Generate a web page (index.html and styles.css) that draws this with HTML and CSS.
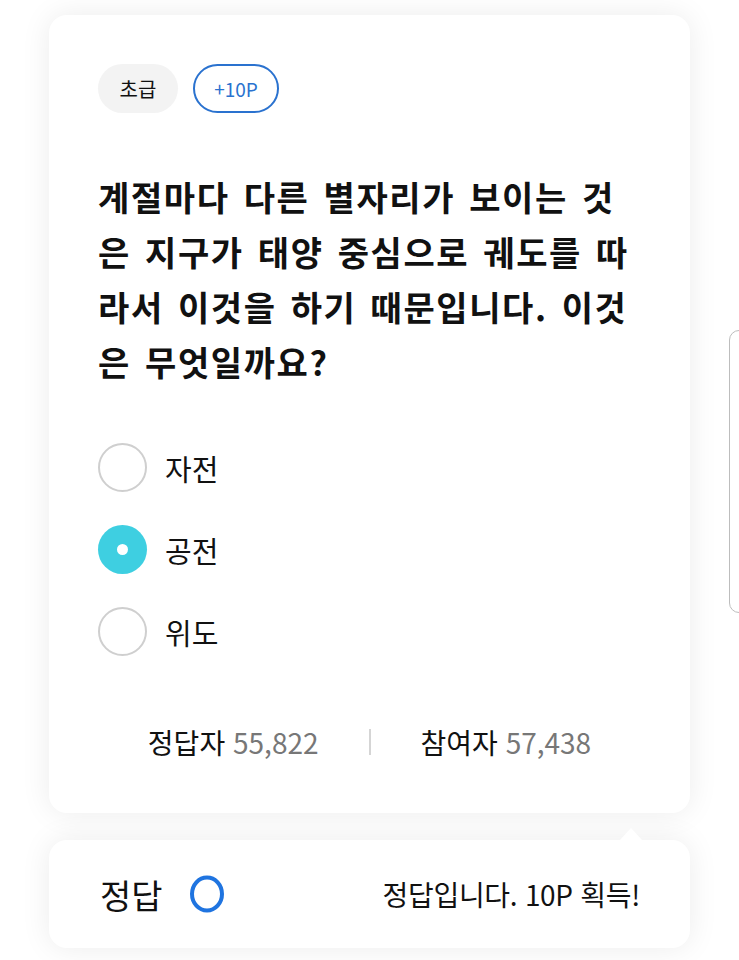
FILE: index.html
```html
<!DOCTYPE html>
<html lang="ko">
<head>
<meta charset="utf-8">
<link rel="stylesheet" href="styles.css">
</head>
<body>
<div class="page">
  <div class="quiz-card">
    <div class="badges">
      <span class="badge level">초급</span>
      <span class="badge point">+10P</span>
    </div>
    <h1 class="question">계절마다 다른 별자리가 보이는 것은 지구가 태양 중심으로 궤도를 따라서 이것을 하기 때문입니다. 이것은 무엇일까요?</h1>
    <ul class="options">
      <li class="option"><span class="radio"></span><span class="label">자전</span></li>
      <li class="option selected"><span class="radio"></span><span class="label">공전</span></li>
      <li class="option"><span class="radio"></span><span class="label">위도</span></li>
    </ul>
    <div class="stats">
      <div class="stat"><span class="stat-name">정답자</span> <span class="stat-num">55,822</span></div>
      <span class="divider"></span>
      <div class="stat"><span class="stat-name">참여자</span> <span class="stat-num">57,438</span></div>
    </div>
  </div>
  <div class="result-card">
    <div class="result-left">
      <span class="result-title">정답</span>
      <svg class="ring" width="36" height="40" viewBox="0 0 36 40"><ellipse cx="18" cy="20" rx="15" ry="16.5" fill="none" stroke="#1f74e0" stroke-width="4"/></svg>
    </div>
    <span class="result-msg">정답입니다. 10P 획득!</span>
  </div>
  <div class="next-card"></div>
</div>
</body>
</html>
```
FILE: styles.css
```css
* { box-sizing: border-box; }
html, body { margin: 0; padding: 0; background: #fff; }
body {
  font-family: "Noto Sans CJK KR", "Noto Sans", sans-serif;
  color: #111;
  width: 739px;
  height: 960px;
  overflow: hidden;
}
.page {
  position: relative;
  padding: 15px 0 0 49px;
  height: 960px;
}
.quiz-card {
  width: 641px;
  height: 798px;
  background: #fff;
  border-radius: 18px;
  box-shadow: 0 0 30px rgba(0,0,0,0.08);
  padding: 49px 49px 0 49px;
  display: flex;
  flex-direction: column;
}
.badges { display: flex; gap: 15px; }
.badge {
  height: 49px;
  border-radius: 25px;
  display: inline-flex;
  align-items: center;
  justify-content: center;
  font-size: 20px;
}
.badge.level { width: 80px; background: #f3f3f3; color: #111; }
.badge.point { width: 86px; border: 2px solid #2a72cf; color: #2a72cf; font-size: 19px; }
.question {
  margin: 56px 0 0 0;
  font-size: 34px;
  line-height: 55px;
  font-weight: 700;
  letter-spacing: 1.6px;
  word-spacing: 3px;
  color: #111;
  width: 543px;
  word-break: break-all;
}
.options {
  list-style: none;
  margin: 54px 0 0 0;
  padding: 0;
  display: flex;
  flex-direction: column;
  gap: 33px;
}
.option { display: flex; align-items: center; gap: 18px; height: 49px; }
.radio {
  width: 49px; height: 49px;
  border-radius: 50%;
  border: 2px solid #cfcfcf;
  position: relative;
  flex: none;
}
.option.selected .radio {
  border: none;
  background: #3ecfe1;
}
.option.selected .radio::after {
  content: "";
  position: absolute;
  left: 19px; top: 19px;
  width: 11px; height: 11px;
  border-radius: 50%;
  background: #fff;
}
.label { font-size: 29px; color: #111; }
.stats {
  margin-top: 66px;
  display: flex;
  align-items: center;
  justify-content: center;
  gap: 50px;
  font-size: 28px;
}
.stat-num { color: #777; font-weight: 400; }
.divider { width: 2px; height: 26px; background: #d5d5d5; }
.result-card {
  position: relative;
  margin-top: 27px;
  width: 641px;
  height: 108px;
  background: #fff;
  border-radius: 18px;
  box-shadow: 0 0 30px rgba(0,0,0,0.08);
  display: flex;
  align-items: center;
  justify-content: space-between;
  padding: 0 50px 0 51px;
}
.result-card::before {
  content: "";
  position: absolute;
  top: -12px;
  left: 571px;
  border-left: 11px solid transparent;
  border-right: 11px solid transparent;
  border-bottom: 12px solid #fff;
}
.result-left { display: flex; align-items: center; gap: 26px; }
.result-title { font-size: 34px; color: #111; }
.ring { display: block; }
.result-msg { font-size: 28px; color: #111; letter-spacing: -0.3px; }
.next-card {
  position: absolute;
  left: 729px;
  top: 330px;
  width: 60px;
  height: 283px;
  border: 1px solid #bdbdbd;
  border-radius: 10px;
  background: #fff;
}
```
